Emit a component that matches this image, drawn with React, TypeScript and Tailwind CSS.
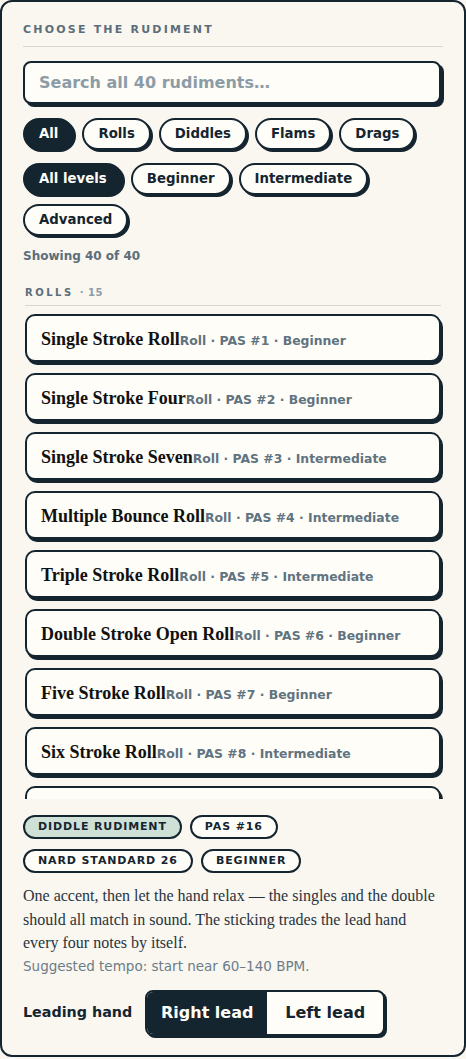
import { useState } from 'react';

type Rudiment = { name: string; family: string; pas: number; level: string };

const ROLLS: Rudiment[] = [
  { name: 'Single Stroke Roll', family: 'Roll', pas: 1, level: 'Beginner' },
  { name: 'Single Stroke Four', family: 'Roll', pas: 2, level: 'Beginner' },
  { name: 'Single Stroke Seven', family: 'Roll', pas: 3, level: 'Intermediate' },
  { name: 'Multiple Bounce Roll', family: 'Roll', pas: 4, level: 'Intermediate' },
  { name: 'Triple Stroke Roll', family: 'Roll', pas: 5, level: 'Intermediate' },
  { name: 'Double Stroke Open Roll', family: 'Roll', pas: 6, level: 'Beginner' },
  { name: 'Five Stroke Roll', family: 'Roll', pas: 7, level: 'Beginner' },
  { name: 'Six Stroke Roll', family: 'Roll', pas: 8, level: 'Intermediate' },
  { name: 'Seven Stroke Roll', family: 'Roll', pas: 9, level: 'Intermediate' },
  { name: 'Nine Stroke Roll', family: 'Roll', pas: 10, level: 'Intermediate' },
  { name: 'Ten Stroke Roll', family: 'Roll', pas: 11, level: 'Intermediate' },
  { name: 'Eleven Stroke Roll', family: 'Roll', pas: 12, level: 'Intermediate' },
  { name: 'Thirteen Stroke Roll', family: 'Roll', pas: 13, level: 'Advanced' },
  { name: 'Fifteen Stroke Roll', family: 'Roll', pas: 14, level: 'Advanced' },
  { name: 'Seventeen Stroke Roll', family: 'Roll', pas: 15, level: 'Advanced' },
];

const FAMILIES = ['All', 'Rolls', 'Diddles', 'Flams', 'Drags'];
const LEVELS = ['All levels', 'Beginner', 'Intermediate', 'Advanced'];

const sans = 'font-["DejaVu_Sans",Verdana,sans-serif]';
const serif = 'font-["Liberation_Serif","Times_New_Roman",serif]';

function Chip({ label, active, onClick }: { label: string; active: boolean; onClick: () => void }) {
  return (
    <button
      type="button"
      onClick={onClick}
      className={`h-[32px] rounded-full border-2 border-[#152530] px-[14px] text-[13.3px] font-bold leading-none shadow-[2px_2px_0_#152530] ${
        active ? 'bg-[#152530] text-[#fffdf8]' : 'bg-[#fffdf8] text-[#152530]'
      }`}
    >
      {label}
    </button>
  );
}

function Tag({ label, tone }: { label: string; tone?: boolean }) {
  return (
    <span
      className={`inline-flex h-[24px] items-center rounded-full border-2 border-[#152530] px-[13px] text-[11px] font-bold uppercase tracking-[0.08em] text-[#152530] ${
        tone ? 'bg-[#cfe0d6]' : 'bg-[#fffdf8]'
      }`}
    >
      {label}
    </span>
  );
}

export default function App() {
  const [family, setFamily] = useState('All');
  const [level, setLevel] = useState('All levels');
  const [query, setQuery] = useState('');
  const [lead, setLead] = useState<'right' | 'left'>('right');

  return (
    <div className={`min-h-screen bg-[#faf6f0] ${sans}`}>
      <div className="h-[1057px] rounded-[12px] border-2 border-[#152530] bg-[#faf6f0] px-[21px] pt-[20px]">
        <h2 className="border-b border-[#dcd5cb] pb-[8px] text-[11px] font-bold uppercase leading-4 tracking-[0.2em] text-[#5c6e7a]">
          Choose the rudiment
        </h2>

        <input
          type="text"
          value={query}
          onChange={(e) => setQuery(e.target.value)}
          placeholder="Search all 40 rudiments…"
          className="mt-[14px] h-[43px] w-[418px] rounded-[8px] border-2 border-[#152530] bg-[#fffdf8] px-[14px] text-[16px] font-bold text-[#152530] shadow-[3px_3px_0_#152530] outline-none placeholder:text-[#8c9ca6]"
        />

        <div className="mt-[14px] flex flex-wrap gap-2">
          {FAMILIES.map((f) => (
            <Chip key={f} label={f} active={family === f} onClick={() => setFamily(f)} />
          ))}
        </div>
        <div className="mt-[13px] flex flex-wrap gap-x-2 gap-y-[9px]">
          {LEVELS.map((l) => (
            <Chip key={l} label={l} active={level === l} onClick={() => setLevel(l)} />
          ))}
        </div>

        <p className="mt-[12px] text-[12px] font-bold leading-4 text-[#5c6e7a]">Showing 40 of 40</p>

        <div className="mt-[10px] h-[525px] overflow-y-auto px-[2px] [scrollbar-width:none]">
          <div className="flex items-baseline gap-[6px] border-b border-[#dcd5cb] pb-[6px] pt-[13px]">
            <span className="text-[10px] font-bold uppercase leading-3 tracking-[0.25em] text-[#5c6e7a]">Rolls</span>
            <span className="text-[10px] font-bold leading-3 tracking-[0.05em] text-[#8c9ca6]">· 15</span>
          </div>
          <ul className="mt-[8px] flex flex-col gap-[11px] pb-2">
            {ROLLS.map((r) => (
              <li key={r.pas}>
                <button
                  type="button"
                  className="flex h-[48px] w-[416px] items-baseline rounded-[10px] border-2 border-[#152530] bg-[#fffdf8] px-[14px] pt-[13px] text-left shadow-[2px_3px_0_#152530]"
                >
                  <span className={`${serif} text-[18px] font-bold leading-5 text-[#111]`}>{r.name}</span>
                  <span className="text-[12.4px] font-bold text-[#5f7380]">
                    {r.family} · PAS #{r.pas} · {r.level}
                  </span>
                </button>
              </li>
            ))}
          </ul>
        </div>

        <div className="mt-[16px] flex flex-wrap gap-x-2 gap-y-[10px]">
          <Tag label="Diddle rudiment" tone />
          <Tag label="PAS #16" />
          <Tag label="NARD standard 26" />
          <Tag label="Beginner" />
        </div>

        <p className={`${serif} mt-[11px] text-[16px] leading-[23.5px] text-[#27343e]`}>
          One accent, then let the hand relax — the singles and the double should all match in sound. The sticking
          trades the lead hand every four notes by itself.
        </p>
        <p className="text-[13.5px] leading-[22px] text-[#6b7d88]">Suggested tempo: start near 60–140 BPM.</p>

        <div className="mt-[13px] flex items-center gap-[13px]">
          <span className="text-[14.3px] font-bold text-[#152530]">Leading hand</span>
          <div className="flex h-[46px] overflow-hidden rounded-[8px] border-2 border-[#152530] bg-[#fffdf8] shadow-[2px_2px_0_#152530]">
            <button
              type="button"
              onClick={() => setLead('right')}
              className={`w-[120px] text-[16px] font-bold ${lead === 'right' ? 'bg-[#152530] text-[#fffdf8]' : 'text-[#152530]'}`}
            >
              Right lead
            </button>
            <button
              type="button"
              onClick={() => setLead('left')}
              className={`w-[116px] text-[16px] font-bold ${lead === 'left' ? 'bg-[#152530] text-[#fffdf8]' : 'text-[#152530]'}`}
            >
              Left lead
            </button>
          </div>
        </div>
      </div>
    </div>
  );
}
